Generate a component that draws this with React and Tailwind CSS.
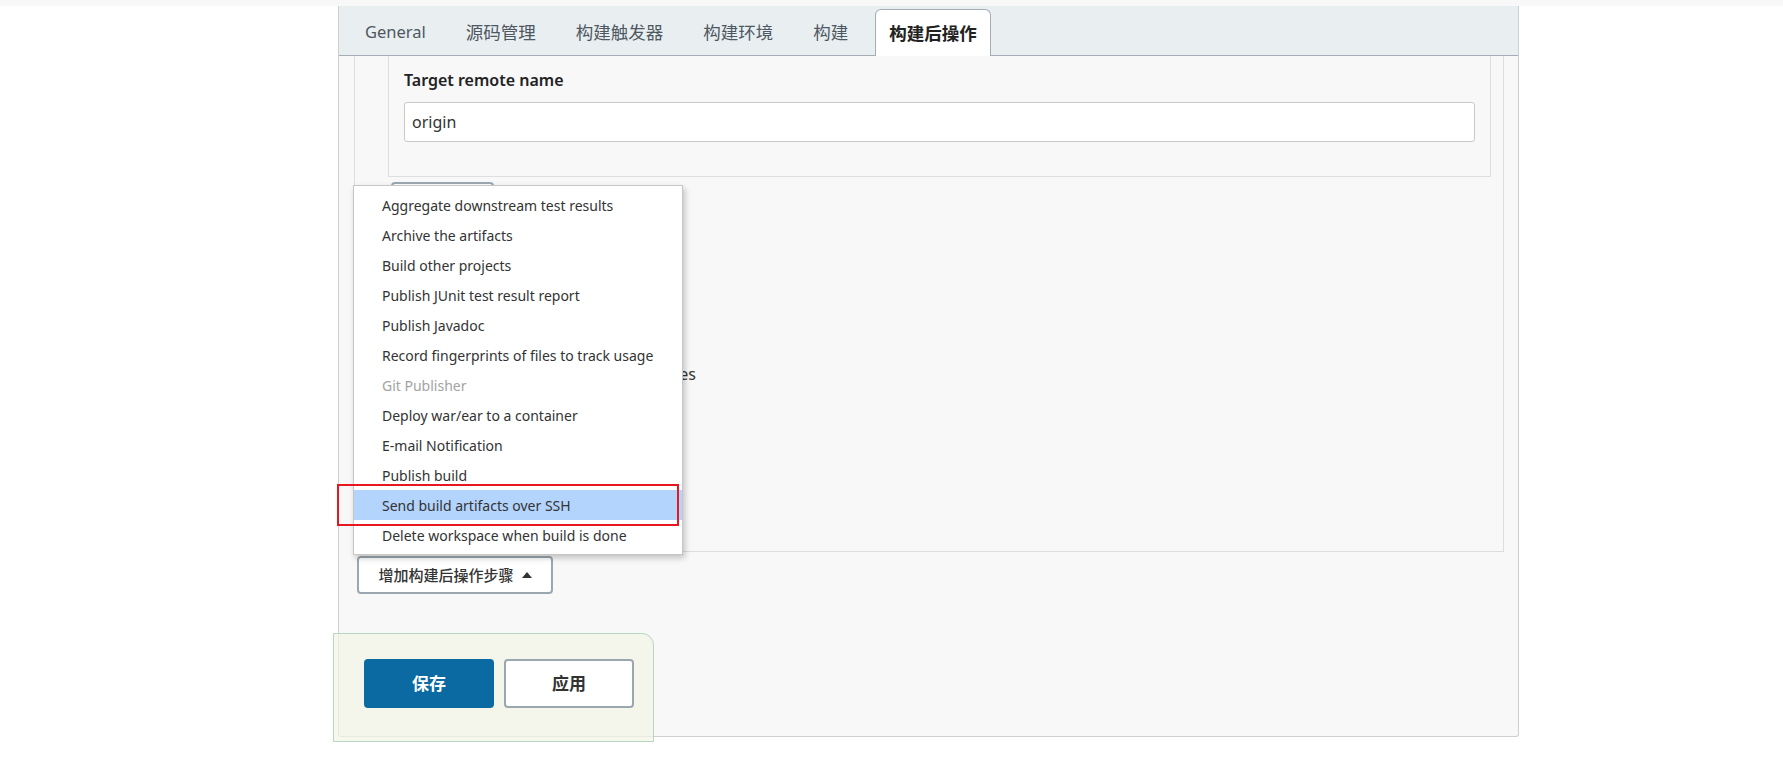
import React from "react";

const tabs = ["General", "源码管理", "构建触发器", "构建环境", "构建", "构建后操作"];

const items = [
  "Aggregate downstream test results",
  "Archive the artifacts",
  "Build other projects",
  "Publish JUnit test result report",
  "Publish Javadoc",
  "Record fingerprints of files to track usage",
  "Git Publisher",
  "Deploy war/ear to a container",
  "E-mail Notification",
  "Publish build",
  "Send build artifacts over SSH",
  "Delete workspace when build is done",
];

export default function App() {
  return (
    <div className="min-h-[779px] bg-white text-[#333] font-['Noto_Sans','Noto_Sans_CJK_SC',sans-serif]">
      <div className="h-[6px] bg-[#f8f8f8]" />

      {/* config panel */}
      <div className="relative ml-[338px] w-[1181px] h-[731px] bg-[#f8f8f8] border-x border-b border-[#cfcfcf] rounded-b-[3px]">
        {/* tabs */}
        <div className="flex items-end gap-[14px] h-[50px] pl-[13px] bg-[#e9eef1] border-b border-[#a3adb6]">
          {tabs.map((t, i) =>
            i === tabs.length - 1 ? (
              <div
                key={t}
                className="-mb-px h-[47px] px-[13px] flex items-center bg-white border border-b-0 border-[#a3adb6] rounded-t-[6px] text-[17.5px] font-bold text-[#222]"
              >
                {t}
              </div>
            ) : (
              <div
                key={t}
                className={`h-[46px] px-[13px] flex items-center text-[#4e5862] ${
                  i === 0 ? "text-[16.5px]" : "text-[17.5px]"
                }`}
              >
                {t}
              </div>
            )
          )}
        </div>

        {/* post-build section */}
        <div className="ml-[15px] mr-[14px] h-[496px] border-x border-b border-[#dedede]">
          <div className="ml-[33px] mr-[12px] h-[121px] px-[15px] border-x border-b border-[#dedede]">
            <div className="pt-[13px] text-[16px] leading-[22px] font-semibold text-[#222]">Target remote name</div>
            <div className="mt-[11px] h-[40px] flex items-center px-[7px] bg-white border border-[#c9c9c9] rounded-[3px] text-[16px] text-[#333]">
              origin
            </div>
          </div>

          <div className="ml-[36px] mt-[5px] w-[103px] h-[34px] bg-white border-2 border-[#9ba7af] rounded-[4px]" />

          <div className="mt-[147px] w-[341px] text-right text-[16px] leading-[22px] text-[#333]">
            Clean up local branches
          </div>
        </div>

        {/* add step button */}
        <div className="ml-[18px] mt-[4px] w-[196px] h-[38px] flex items-center justify-center gap-[8px] bg-white border-2 border-[#9ba7af] rounded-[4px] text-[15px] font-medium text-[#333]">
          <span>增加构建后操作步骤</span>
          <svg width="10" height="6" viewBox="0 0 10 6">
            <polygon points="0,6 5,0 10,6" fill="#333" />
          </svg>
        </div>

        {/* dropdown menu */}
        <div className="absolute left-[14px] top-[179px] w-[330px] h-[370px] pt-[4px] bg-white border border-[#c6c6c6] shadow-[2px_3px_6px_rgba(0,0,0,0.22)]">
          {items.map((it) => (
            <div
              key={it}
              className={`h-[30px] flex items-center pl-[28px] text-[14px] ${
                it === "Send build artifacts over SSH" ? "bg-[#b3d4fd]" : ""
              } ${it === "Git Publisher" ? "text-[#a3a3a3]" : "text-[#333]"}`}
            >
              {it}
            </div>
          ))}
        </div>

        {/* highlight annotation */}
        <div className="absolute left-[-2px] top-[478px] w-[342px] h-[42px] border-2 border-[#e8161f]" />

        {/* bottom bar */}
        <div className="absolute left-[-6px] top-[627px] w-[321px] h-[109px] flex gap-[10px] pl-[30px] pt-[25px] bg-[#f2f4e6]/70 border border-[#b8d6c1] rounded-tr-[12px]">
          <div className="w-[130px] h-[49px] flex items-center justify-center bg-[#0b6aa2] rounded-[4px] text-[17px] font-bold text-white">
            保存
          </div>
          <div className="w-[130px] h-[49px] flex items-center justify-center bg-white border-2 border-[#9ba7af] rounded-[4px] text-[17px] font-bold text-[#333]">
            应用
          </div>
        </div>
      </div>
    </div>
  );
}
